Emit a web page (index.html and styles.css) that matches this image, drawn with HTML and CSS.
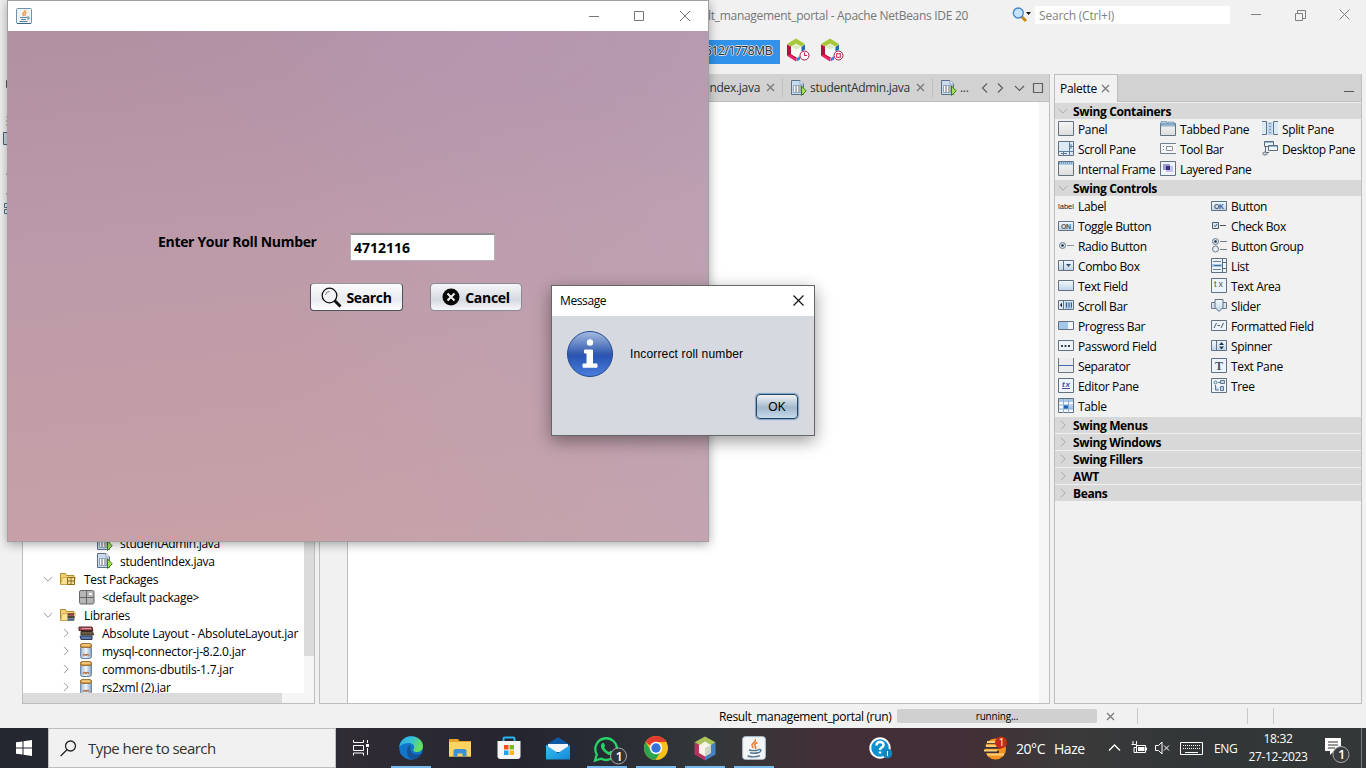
FILE: index.html
```html
<!DOCTYPE html>
<html lang="en">
<head>
<meta charset="utf-8">
<title>Apache NetBeans IDE 20</title>
<link rel="stylesheet" href="styles.css">
</head>
<body>
<svg class="defs" width="0" height="0">
  <defs>
    <linearGradient id="gBlue" x1="0" y1="0" x2="0" y2="1"><stop offset="0" stop-color="#f4f9fd"/><stop offset="1" stop-color="#bcd3e8"/></linearGradient>
    <linearGradient id="gGrey" x1="0" y1="0" x2="0" y2="1"><stop offset="0" stop-color="#f6f6f6"/><stop offset="1" stop-color="#dcdcdc"/></linearGradient>
    <linearGradient id="gInfo" x1="0" y1="0" x2="0" y2="1"><stop offset="0" stop-color="#a5bde3"/><stop offset=".5" stop-color="#3259ad"/><stop offset=".55" stop-color="#2a55b4"/><stop offset="1" stop-color="#4a80dd"/></linearGradient>
    <linearGradient id="gMail" x1="0" y1="0" x2="1" y2="1"><stop offset="0" stop-color="#35c1f5"/><stop offset="1" stop-color="#1687d8"/></linearGradient>
    <linearGradient id="gEdge" x1="0" y1="0" x2="1" y2="0.4"><stop offset="0" stop-color="#2aa7e0"/><stop offset=".5" stop-color="#35c1d8"/><stop offset="1" stop-color="#66e05c"/></linearGradient>
    <linearGradient id="gJar" x1="0" y1="0" x2="1" y2="0"><stop offset="0" stop-color="#9fb4cc"/><stop offset=".5" stop-color="#eef6fc"/><stop offset="1" stop-color="#86a5c6"/></linearGradient>
    <symbol id="java-file" viewBox="0 0 16 16">
      <path d="M.5.500h8.500l3.500 3.500v10.500H.5z" fill="#c9dced" stroke="#5c7088"/><path d="M9 .5v3.500h3.500" fill="#fff" stroke="#8aa0b8"/>
      <path d="M2.500 5.500h8.500v7H2.500z" fill="#fff" stroke="#7c93a8" stroke-width=".8"/><path d="M4 7h2m1 0h3M4 9h2m1 0h3M4 11h2m1 0h3" stroke="#5d6470"/>
      <path d="M10.500 6v9.500l4.700-4.700z" fill="#a5e05c" stroke="#3c7a18"/>
    </symbol>
    <symbol id="close" viewBox="0 0 9 9"><path d="M1 1l7 7M8 1L1 8" stroke="#777" stroke-width="1.200" fill="none"/></symbol>
    <symbol id="down" viewBox="0 0 10 10"><path d="M.8 3L5 7.200 9.200 3" fill="none" stroke="currentColor"/></symbol>
    <symbol id="right" viewBox="0 0 10 10"><path d="M3 .8L7.200 5 3 9.200" fill="none" stroke="currentColor"/></symbol>
    <symbol id="folder" viewBox="0 0 16 14"><path d="M.5 12.500V1.500h5l1 2h7.500v9z" fill="#f3cf72" stroke="#b18c35"/><path d="M.5 12.500l2-7H15.500l-2 7z" fill="#fae092" stroke="#c59e44" stroke-width=".7"/></symbol>
    <symbol id="jar" viewBox="0 0 12 16"><rect x=".6" y="2.500" width="10.800" height="13" rx="2" fill="url(#gJar)" stroke="#65809f"/><rect x=".5" y=".7" width="11" height="3.600" rx="1.500" fill="#e4ab4d" stroke="#8f5d1c"/><path d="M2 2h8" stroke="#fbe3a8"/><path d="M3 12.500q1.500-2 3 0 1.500-2 3 0" fill="none" stroke="#b4774e" stroke-width="1.300"/></symbol>
    <symbol id="netbeans" viewBox="0 0 24 24"><path d="M1 6L10 .5l9 5.500-3.500 2.500L10 5.500 5 8.500z" fill="#a6c838"/><path d="M1 6.500l4 2v7.500l5.500 3.200v4L1 17.500z" fill="#b01239"/><path d="M3.500 16.500l6.500 4v3L1.500 18z" fill="#f0256a"/><path d="M19 6.500v5l-3.500 2V9z" fill="#2468b4"/><path d="M11 20l3-1.800v3.300l-3 1.800z" fill="#2489e4"/><path d="M5.500 9L10 6.300l5 2.700v7.500L10 19l-4.500-2.600z" fill="#f9fbf6"/><path d="M5.500 9l4.500 2.600L15 9l-5-2.700z" fill="#dcebc0"/></symbol>
    <symbol id="cup" viewBox="0 0 24 24"><rect x=".7" y=".7" width="22.600" height="22.600" rx="2.500" fill="#f3f5f6" stroke="#bccbd6"/><path d="M13 3.500c2 2.500-4 4-3 6 .4 1 1.500 1.500 1 2.800M15.500 6.500c-3 1.300-3.500 2.400-2 4 .6.800.2 1.500-.7 2" fill="none" stroke="#e87b2d" stroke-width="1.500"/><path d="M7 14q4.500 1.300 9.500 0M8 16.700q3.500 1 7.500 0M5.500 20q6.500 1.800 12.500-.3M16.500 13.500c4-.8 2.500 3-1 3.500" fill="none" stroke="#507590" stroke-width="1.400"/></symbol>
  </defs>
</svg>

<div class="desktop">
  <div class="ide">
    <header class="titlebar">
      <span class="ide-title">Result_management_portal - Apache NetBeans IDE 20</span>
      <svg class="find" width="20" height="16" viewBox="0 0 20 16"><path d="M9.500 9.500l4.500 4.500" stroke="#c98a1b" stroke-width="3"/><circle cx="6.300" cy="6" r="5" fill="#c3e2fb" stroke="#4584c4" stroke-width="1.300"/><path d="M14 5h5l-2.500 3z" fill="#111"/></svg>
      <div class="quick">Search (Ctrl+I)</div>
      <svg class="wctl" width="110" height="12" viewBox="0 0 110 12" fill="none" stroke="#808080"><path d="M5 5.500h10M49.500 4.500h7v7h-7zM51.500 4V1.500h8v8H57M93.500.5l10 10m0-10l-10 10"/></svg>
    </header>
    <div class="toolbar">
      <div class="memory"><span>512/1778MB</span></div>
      <svg width="24" height="24" viewBox="0 0 24 24"><use href="#netbeans"/><circle cx="18.500" cy="17.500" r="4.500" fill="#fff" stroke="#a4163c"/><path d="M18.500 14.500v3h2.500" fill="none" stroke="#cf1843"/></svg>
      <svg width="24" height="24" viewBox="0 0 24 24"><use href="#netbeans"/><circle cx="18.500" cy="17.500" r="4.500" fill="#fff" stroke="#a4163c"/><rect x="16.700" y="15.700" width="3.600" height="3.600" fill="#fff" stroke="#cf1843"/></svg>
    </div>
    <div class="work">
      <svg class="rail" width="10" height="150" viewBox="0 0 10 150"><path d="M6.500 6.500h3v7h-3z" fill="none" stroke="#555"/><path d="M6.500 43h2M6.500 47h2M6.500 51h2" stroke="#a29432" stroke-width="2"/><path d="M3.500 58.500h6v12h-6z" fill="#c9d6e2" stroke="#4f6275"/><path d="M6.500 100h2M6.500 120h2" stroke="#8d6a22" stroke-width="2"/><path d="M4.500 129.500h5v4h-5zm0 6h5v4h-5z" fill="#e5edf4" stroke="#506f8a"/></svg>
      <section class="projects">
        <div class="tree-area">
          <div class="tree">
            <div class="node file"><svg width="16" height="16"><use href="#java-file"/></svg><span>studentAdmin.java</span></div>
            <div class="node file"><svg width="16" height="16"><use href="#java-file"/></svg><span>studentIndex.java</span></div>
            <div class="node group"><svg class="chev" width="10" height="10"><use href="#down"/></svg><svg width="16" height="14"><use href="#folder"/><path d="M7.500 5.500h7v7h-7zM7.500 9h7M11 5.500v7" fill="#f3dc8e" stroke="#8c6a1f"/></svg><span>Test Packages</span></div>
            <div class="node pkg"><svg width="16" height="15" viewBox="0 0 16 15"><rect x=".5" y=".5" width="14.500" height="13.500" rx="1.500" fill="#b5b5b5" stroke="#696969"/><path d="M1 7.500h14M7.500 1v13" stroke="#666"/><path d="M10 3h3v2h-3z" fill="#f4f4f4"/></svg><span>&lt;default package&gt;</span></div>
            <div class="node group"><svg class="chev" width="10" height="10"><use href="#down"/></svg><svg width="16" height="14"><use href="#folder"/><path d="M7.500 6.500h6.500" stroke="#813b43" stroke-width="2.500"/><path d="M7.500 9h7" stroke="#494437" stroke-width="2"/><path d="M7.500 11.500h6.500" stroke="#49689b" stroke-width="2.500"/></svg><span>Libraries</span></div>
            <div class="node lib"><svg class="chev" width="10" height="10"><use href="#right"/></svg><svg width="17" height="15" viewBox="0 0 17 15"><path d="M1 1h13l1 3.500H1z" fill="#a65359" stroke="#552329"/><path d="M3 5.500h11.500l1 3.500H3z" fill="#695a43" stroke="#332c20"/><path d="M2 10h12v3.500H3z" fill="#5f79ad" stroke="#293856"/><path d="M4 2.500h9" stroke="#d99da0"/></svg><span class="long">Absolute Layout - AbsoluteLayout.jar</span></div>
            <div class="node lib"><svg class="chev" width="10" height="10"><use href="#right"/></svg><svg class="jar" width="12" height="16"><use href="#jar"/></svg><span class="wide">mysql-connector-j-8.2.0.jar</span></div>
            <div class="node lib"><svg class="chev" width="10" height="10"><use href="#right"/></svg><svg class="jar" width="12" height="16"><use href="#jar"/></svg><span class="wide">commons-dbutils-1.7.jar</span></div>
            <div class="node lib"><svg class="chev" width="10" height="10"><use href="#right"/></svg><svg class="jar" width="12" height="16"><use href="#jar"/></svg><span>rs2xml (2).jar</span></div>
          </div>
          <div class="vscroll"><i></i></div>
        </div>
        <div class="hscroll"><i></i></div>
      </section>
      <section class="editor">
        <div class="tabs">
          <div class="tab first"><span>studentIndex.java</span><svg width="9" height="9"><use href="#close"/></svg></div>
          <div class="tab"><svg width="16" height="16"><use href="#java-file"/></svg><span>studentAdmin.java</span><svg width="9" height="9"><use href="#close"/></svg></div>
          <div class="tab last"><svg width="16" height="16"><use href="#java-file"/></svg><span>...</span></div>
          <svg class="tabctl" width="70" height="12" viewBox="0 0 70 12" fill="none" stroke="#606060" stroke-width="1.200"><path d="M9 1.500L4.500 6 9 10.500M20 1.500L24.500 6 20 10.500M37 4l4.500 4.500L46 4M55.500 1.500h9v9h-9z"/></svg>
        </div>
        <div class="canvas"><div class="gutter"></div><div class="page"></div><div class="track"></div></div>
      </section>
      <section class="palette">
        <div class="ptabs"><div class="ptab">Palette<svg width="9" height="9"><use href="#close"/></svg></div><i class="minimize"></i></div>
        <div class="pbody">
          <h3><svg width="10" height="10"><use href="#down"/></svg>Swing Containers</h3>
          <div class="grid three">
            <div><svg viewBox="0 0 16 16"><path d="M.5.500h15v14H.5z" fill="url(#gGrey)" stroke="#617181"/></svg>Panel</div>
            <div><svg viewBox="0 0 16 16"><path d="M.5 2.500h15v12H.5z" fill="url(#gGrey)" stroke="#617181"/><path d="M1 3h14v2H1zM1 .5h6V3H1zM8 1h6v2H8z" fill="#a9cbe9" stroke="#7593ae" stroke-width=".7"/></svg>Tabbed Pane</div>
            <div><svg viewBox="0 0 16 16"><path d="M0 .5h4.500v13H0M16 .5h-4.500v13H16" fill="#d9e9f6"/><path d="M0 .5h4.500v13H0M16 .5h-4.500v13H16" fill="none" stroke="#617181"/><path d="M5.500 1h5v13h-5z" fill="#b8d3ee"/><path d="M8 2v11" stroke="#44688f" stroke-dasharray="1 2"/></svg>Split Pane</div>
            <div><svg viewBox="0 0 16 16"><path d="M.5.500h15v14H.5z" fill="#dbeaf6" stroke="#617181"/><path d="M11.500 1v14M1 10.500h14M13 3v5M3 12.500h6" stroke="#5f7e9b"/><path d="M12 5.500h3M5.500 11v4" stroke="#5f7e9b"/></svg>Scroll Pane</div>
            <div><svg viewBox="0 0 16 16"><path d="M16 2.500H.5v10H16" fill="#f6f6f6" stroke="#71808c"/><path d="M3.500 5v6" stroke="#788" stroke-dasharray="1 2"/><path d="M6.500 5.500h6v4h-6z" fill="#fff" stroke="#8592a0"/></svg>Tool Bar</div>
            <div><svg viewBox="0 0 16 16"><path d="M2.500.5h9v5h-9zM6.500 4.500h9v5h-9z" fill="#eff6fc" stroke="#5d6c7a"/><path d="M3 1.500h8M7 5.500h8" stroke="#8fb8de"/><path d="M3.500 6v5.500H7" fill="none" stroke="#5d6c7a"/><ellipse cx="3" cy="12.500" rx="2.200" ry="1.500" fill="#ddd" stroke="#5d6c7a"/></svg>Desktop Pane</div>
            <div><svg viewBox="0 0 16 16"><path d="M.5.500h15v14H.5z" fill="url(#gGrey)" stroke="#617181"/><path d="M1 1h14v3H1z" fill="#a9cbe9"/><path d="M1 2h14" stroke="#536f88" stroke-dasharray="1 1"/></svg>Internal Frame</div>
            <div><svg viewBox="0 0 16 16"><path d="M.5.500h15v14H.5z" fill="#eef4fa" stroke="#617181"/><path d="M3 3h7v6H3z" fill="#9d99d6"/><path d="M6 5h7v6H6z" fill="#c4c2ec"/><path d="M6 5h4v4H6z" fill="#393579"/></svg>Layered Pane</div>
          </div>
          <h3><svg width="10" height="10"><use href="#down"/></svg>Swing Controls</h3>
          <div class="grid two">
            <div><svg viewBox="0 0 16 16"><text class="tiny wordy" x="0" y="10.500" textLength="16" lengthAdjust="spacingAndGlyphs">label</text></svg>Label</div>
            <div><svg viewBox="0 0 16 16"><path d="M.5 3.500h15v9H.5z" fill="url(#gBlue)" stroke="#617181"/><text class="tiny" x="3" y="11" textLength="10">OK</text></svg>Button</div>
            <div><svg viewBox="0 0 16 16"><path d="M.5 3.500h15v9H.5z" fill="url(#gBlue)" stroke="#617181"/><text class="tiny" x="3" y="11" textLength="10">ON</text></svg>Toggle Button</div>
            <div><svg viewBox="0 0 16 16"><path d="M1.500 4.500h6v6h-6z" fill="#d7e6f3" stroke="#4a5a69"/><path d="M3 7.500l1.500 1L6 6M9 7.500h6" fill="none" stroke="#4a5a69"/></svg>Check Box</div>
            <div><svg viewBox="0 0 16 16"><circle cx="4.500" cy="7.500" r="3" fill="#d7e6f3" stroke="#6d7b88"/><circle cx="4.500" cy="7.500" r="1.300" fill="#1e2e3d"/><path d="M9 7.500h7" stroke="#8a959f"/></svg>Radio Button</div>
            <div><svg viewBox="0 0 16 16"><circle cx="4.500" cy="3.500" r="3" fill="#d7e6f3" stroke="#6d7b88"/><circle cx="4.500" cy="3.500" r="1.300" fill="#1e2e3d"/><circle cx="4.500" cy="11" r="3" fill="#e6eef5" stroke="#6d7b88"/><path d="M9 3.500h7M9 11.500h7" stroke="#737f8a"/></svg>Button Group</div>
            <div><svg viewBox="0 0 16 16"><path d="M.5 2.500h15v10H.5zM5.500 3v9" fill="url(#gBlue)" stroke="#617181"/><path d="M8 6h5L10.500 9z" fill="#36536e"/></svg>Combo Box</div>
            <div><svg viewBox="0 0 16 16"><path d="M.5.500h15v14H.5z" fill="#edf5fb" stroke="#617181"/><path d="M2 3.500h8M2 11.500h8" stroke="#6a7f91"/><path d="M1 6h10v3H1z" fill="#a0c7ec"/><path d="M3 7.500h7" stroke="#526d85"/><path d="M11.500 1v14M12 4.500h3M12 10.500h3" stroke="#526d85"/></svg>List</div>
            <div><svg viewBox="0 0 16 16"><path d="M.5 2.500h15v10H.5z" fill="url(#gBlue)" stroke="#617181"/></svg>Text Field</div>
            <div><svg viewBox="0 0 16 16"><path d="M.5.500h15v14H.5z" fill="#edf5fb" stroke="#617181"/><text class="tiny big" x="3" y="8.500" textLength="9">tx</text></svg>Text Area</div>
            <div><svg viewBox="0 0 16 16"><path d="M.5 2.500h15v9H.5zM5.500 3v9" fill="#dceaf6" stroke="#617181"/><path d="M4 4.500v5L2 7z" fill="#222"/><path d="M7 4h7v7H7z" fill="#a8caea"/><path d="M8.500 4.500v5M11 4.500v5M13.500 4.500v5" stroke="#435e77"/></svg>Scroll Bar</div>
            <div><svg viewBox="0 0 16 16"><path d="M.5 4.500h15v6H.5z" fill="#d7e3ed" stroke="#6c7a88"/><path d="M4 1.500h8v8l-4 4-4-4z" fill="url(#gBlue)" stroke="#617181"/></svg>Slider</div>
            <div><svg viewBox="0 0 16 16"><path d="M.5 3.500h15v8H.5z" fill="#f2f6fa" stroke="#617181"/><path d="M1 4h9v7H1z" fill="#a4c9e8"/></svg>Progress Bar</div>
            <div><svg viewBox="0 0 16 16"><path d="M.5 2.500h15v10H.5z" fill="#edf3f8" stroke="#617181"/><path d="M3 10l2.500-5M6.500 7.500h2.500M10 10l2.500-5" stroke="#4b5966"/></svg>Formatted Field</div>
            <div><svg viewBox="0 0 16 16"><path d="M.5 2.500h15v10H.5z" fill="#edf3f8" stroke="#617181"/><path d="M3 8h2m1.500 0h2M10 8h2" stroke="#364553" stroke-width="2"/></svg>Password Field</div>
            <div><svg viewBox="0 0 16 16"><path d="M.5 2.500h15v10H.5zM5.500 3v10" fill="url(#gBlue)" stroke="#617181"/><path d="M8 7l2.500-3L13 7zM8 8.500h5L10.500 11.500z" fill="#203950"/></svg>Spinner</div>
            <div><svg viewBox="0 0 16 16"><path d="M.5 0v14.500h15V0" fill="#ececec" stroke="#6d7982"/><path d="M1 7.500h14" stroke="#466ab9"/></svg>Separator</div>
            <div><svg viewBox="0 0 16 16"><path d="M.5.500h15v14H.5z" fill="#edf5fb" stroke="#617181"/><text class="serif" x="4" y="11.500">T</text></svg>Text Pane</div>
            <div><svg viewBox="0 0 16 16"><path d="M.5.500h15v14H.5z" fill="#edf5fb" stroke="#617181"/><text class="tiny violet" x="4" y="9" textLength="8">tx</text><path d="M4 10.500h8" stroke="#5148a4"/></svg>Editor Pane</div>
            <div><svg viewBox="0 0 16 16"><path d="M.5.500h15v14H.5z" fill="#edf5fb" stroke="#617181"/><circle cx="4.500" cy="4.500" r="1.400" fill="none" stroke="#4d799e"/><path d="M4.500 7v5H8M7 4.500h2M9.500 2.500h4v3h-4zM9.500 8.500h3v4h-3z" fill="#b8d6f1" stroke="#637687"/></svg>Tree</div>
            <div><svg viewBox="0 0 16 16"><path d="M.5.500h15v14H.5z" fill="#f4f8fc" stroke="#617181"/><path d="M1 1h14v3H1zM10 8h5v3h-5z" fill="#a9c8e8"/><path d="M6 7h4v4H6z" fill="#1c64b8"/><path d="M1 7h14M1 11h14M5.500 1v14M10.500 1v14" stroke="#8bb0d0"/></svg>Table</div>
          </div>
          <h3><svg width="10" height="10"><use href="#right"/></svg>Swing Menus</h3>
          <h3><svg width="10" height="10"><use href="#right"/></svg>Swing Windows</h3>
          <h3><svg width="10" height="10"><use href="#right"/></svg>Swing Fillers</h3>
          <h3><svg width="10" height="10"><use href="#right"/></svg>AWT</h3>
          <h3><svg width="10" height="10"><use href="#right"/></svg>Beans</h3>
        </div>
      </section>
    </div>
    <footer class="status">
      <span class="job">Result_management_portal (run)</span>
      <div class="running">running...</div>
      <svg class="stop" width="9" height="9"><use href="#close"/></svg>
      <i class="sep s1"></i><i class="sep s2"></i><i class="sep s3"></i>
    </footer>
  </div>

  <div class="taskbar">
    <div class="start"><svg width="16" height="16" viewBox="0 0 16 16"><path d="M0 2.300L6.500 1.400v6.100H0zM7.500 1.200L16 0v7.500H7.500zM0 8.500h6.500v6.100L0 13.700zM7.500 8.500H16V16l-8.500-1.200z" fill="#fff"/></svg></div>
    <div class="tsearch"><svg width="17" height="17" viewBox="0 0 17 17" fill="none" stroke="#222" stroke-width="1.300"><circle cx="10.500" cy="6" r="5"/><path d="M7 9.800L.6 16"/></svg><span>Type here to search</span></div>
    <div class="app view"><svg width="17" height="16" viewBox="0 0 17 16" fill="none" stroke="#fff"><path d="M.5 0v2.500h10V0M.5 5.500h10v5H.5zM.5 15.500V13h10v2.500M14.500 0v3M14.500 8v7"/><path d="M13 4h3v3h-3z" fill="#fff" stroke="none"/></svg></div>
    <div class="app on"><svg width="24" height="24" viewBox="0 0 24 24"><circle cx="12" cy="12" r="11.800" fill="#1175c9"/><path d="M.3 11C1 4.500 6 .2 12 .2c7 0 12 4.600 12 9.800 0 4-3 6-6.500 6-3 0-4-1.300-2.800-3 1.500-2.500-.7-6-4.700-6C6 7 2 8.500.3 11z" fill="url(#gEdge)"/><path d="M8 15c0-3.500 1.600-5.500 4-5.800-2 2-.3 9.300 5.500 9.300 2.500 0 4.500-1 5.200-1.500C20.500 21.500 17 23.500 14 23.500c-4 0-6-4.500-6-8.500z" fill="#155398"/></svg></div>
    <div class="app"><svg width="22" height="20" viewBox="0 0 22 20"><path d="M0 1h9l1.500 2H22v15.500H0z" fill="#e4a22a"/><path d="M0 4h22v14.500H0z" fill="#fcd462"/><path d="M4.500 18.500v-5.500q0-2 2-2h9q2 0 2 2v5.500h-4v-3h-5v3z" fill="#3a91d8"/></svg></div>
    <div class="app"><svg width="24" height="24" viewBox="0 0 24 24"><path d="M6.500 6V2.800q0-1.300 1.300-1.300h8.400q1.300 0 1.300 1.300V6" fill="none" stroke="#26b5ed" stroke-width="2"/><path d="M.5 5h23v15q0 3-3 3h-17q-3 0-3-3z" fill="#f5f5f5"/><path d="M7 9h4.500v4.500H7z" fill="#f05022"/><path d="M12.500 9H17v4.500h-4.500z" fill="#7fb913"/><path d="M7 14.500h4.500V19H7z" fill="#1fa3ec"/><path d="M12.500 14.500H17V19h-4.500z" fill="#fdb813"/></svg></div>
    <div class="app"><svg width="24" height="23" viewBox="0 0 24 23"><path d="M0 8L12 0l12 8v5H0z" fill="#0e59a5"/><path d="M2 7h20v8H2z" fill="#f3f6f8"/><path d="M0 8l12 8 12-8v14.500H0z" fill="url(#gMail)"/></svg></div>
    <div class="app on"><svg class="whatsapp" width="34" height="29" viewBox="0 0 34 29"><path d="M2 24.500l1.800-6A10.800 10.800 0 1 1 8.200 22.700z" fill="#272b32" stroke="#25d366" stroke-width="2.300"/><path d="M8.500 8c1.300-1.700 2.300-1.500 3 .2.700 1.700.8 2-.3 3.200 1.200 2.300 2.700 3.700 5 4.700 1.500-1.700 2-1.500 3.300-.8 1.700 1 1.700 1.400.5 2.700-2 2.200-5.500.9-8.800-2.300C7.700 12.500 7.500 9.600 8.500 8z" fill="#25d366"/><circle cx="25.500" cy="20" r="8" fill="#313539" stroke="#aaa"/><text class="badge" x="22.500" y="24.500">1</text></svg></div>
    <div class="app on"><svg width="24" height="24" viewBox="0 0 24 24"><circle cx="12" cy="12" r="12" fill="#fbc116"/><path d="M1.600 6A12 12 0 0 1 22.400 6H12v8z" fill="#e33b2e"/><path d="M1.600 6A12 12 0 0 0 11.500 24l5.500-9-10-.2z" fill="#2da44e"/><circle cx="12" cy="12" r="6.200" fill="#fff"/><circle cx="12" cy="12" r="4.700" fill="#3572df"/></svg></div>
    <div class="app on"><svg width="22" height="25" viewBox="0 0 22 25"><path d="M11 .5l10.500 5.800L17 9.500 11 6 5 9 .5 6.300z" fill="#adc45c"/><path d="M.5 6.500L5 9v8l6 3.500v4L.5 18.500z" fill="#b83460"/><path d="M21.500 6.500v12L11 24.500v-4l6-3.500V9z" fill="#4382c4"/><path d="M11 5.500L17 9v8l-6 3.500L5 17V9z" fill="#f5f5e8"/><path d="M11 12l6-3v8l-6 3.500z" fill="#d2d5c5"/></svg></div>
    <div class="app on"><svg width="24" height="24"><use href="#cup"/></svg></div>
    <div class="tray">
      <svg class="help" width="24" height="23" viewBox="0 0 24 23"><circle cx="11" cy="11" r="9.700" fill="#0d91cf" stroke="#fff" stroke-width="2"/><path d="M7.500 8.500q0-3.500 3.500-3.500t3.500 3q0 1.800-2.500 3-1 .6-1 2" fill="none" stroke="#fff" stroke-width="2.500"/><path d="M11 14.500v2" stroke="#fff" stroke-width="2.500"/><circle cx="18.500" cy="16.500" r="4.800" fill="#1484bd"/><path d="M18.500 14v5" stroke="#fff"/></svg>
      <svg class="haze" width="25" height="25" viewBox="0 0 25 25"><circle cx="12.500" cy="13" r="10.500" fill="#f39322"/><path d="M4 6.500h14M1 11.500h17M0 16h16" stroke="#3e3035" stroke-width="2.500"/><path d="M4 6h12M3 10h19M1 14.500h13M4 18.500h17" stroke="#f8ce76" stroke-width="2"/><circle cx="18" cy="6.500" r="6" fill="#c42b1c"/><text class="alert" x="15.700" y="10">1</text></svg>
      <span class="temp">20°C</span><span class="cond">Haze</span>
      <svg class="icons" width="62" height="16" viewBox="0 0 62 16" fill="none" stroke="#fff"><path d="M1 10.500l5.500-5.500 5.500 5.500" stroke-width="1.300"/><path d="M28.500 5.500h9v7h-9zM38.500 7.500v3M25 1v3M28.500 1v3M23.500 4.500h5v3h-2.500v5h2.500"/><path d="M30 7h6.500v4H30z" fill="#fff" stroke="none"/><path d="M47.500 5.500h3l3.500-3.500v12l-3.500-3.500h-3zM56 5.500l5 5m0-5l-5 5"/></svg>
      <svg class="kbd" width="23" height="13" viewBox="0 0 23 13" fill="none" stroke="#fff"><path d="M.5.500h22v12H.5zM5 10.500h13"/><path d="M3 3.500h18M3 6.500h18" stroke-dasharray="1 1"/></svg>
      <span class="lang">ENG</span>
      <div class="clock"><span>18:32</span><span>27-12-2023</span></div>
      <svg class="note" width="26" height="26" viewBox="0 0 26 26"><path d="M0 0h16v13H9l-4 4v-4H0z" fill="#fff"/><path d="M3 4h10M3 7h10M3 10h7" stroke="#333"/><circle cx="16" cy="16.500" r="8" fill="#3a3d3e" stroke="#aaa"/><text class="badge" x="13" y="21">1</text></svg>
      <i class="edge"></i>
    </div>
  </div>

  <div class="window">
    <div class="wbar"><svg width="16" height="16" viewBox="0 0 16 16"><rect x=".5" y=".5" width="15" height="15" rx="1" fill="#eef2f5" stroke="#6f93ab"/><path d="M1 15.500h14" stroke="#3f6784"/><path d="M9 2c1 2-3 2.500-2 4.500.3.700.8 1 .5 1.500M10.500 4c-2.500 1.500-1 2.500-1.500 4" fill="none" stroke="#ee8a28" stroke-width="1.200"/><path d="M4 9.500h7M5 11.500h5M3.500 13.500h8M11 9h2v2h-2" fill="none" stroke="#5b84a3"/></svg><svg class="wbtn" width="104" height="12" viewBox="0 0 104 12" fill="none" stroke="#777"><path d="M1 6.500h10M46.500 1.500h9v9h-9zM92 1l10 10m0-10L92 11"/></svg></div>
    <div class="form">
      <div class="row"><label>Enter Your Roll Number</label><div class="field">4712116</div></div>
      <div class="buttons">
        <div class="btn"><svg width="21" height="21" viewBox="0 0 21 21"><circle cx="8.500" cy="8.500" r="7.300" fill="#f5f5f7" stroke="#111" stroke-width="1.300"/><path d="M4.500 8q.5-3.500 4-3.500" stroke="#777" fill="none"/><path d="M13.500 13.500l6 6" stroke="#111" stroke-width="3"/></svg><span>Search</span></div>
        <div class="btn second"><svg width="18" height="18" viewBox="0 0 18 18"><circle cx="9" cy="9" r="8.500" fill="#080808"/><path d="M5.500 5.500l7 7m0-7l-7 7" stroke="#eee" stroke-width="2"/></svg><span>Cancel</span></div>
      </div>
    </div>
  </div>

  <div class="dialog">
    <div class="dbar"><span>Message</span><svg width="11" height="11" viewBox="0 0 11 11"><path d="M.5.500l10 10m0-10l-10 10" stroke="#111" stroke-width="1.200"/></svg></div>
    <div class="dbody">
      <div class="dmsg"><svg width="48" height="48" viewBox="0 0 48 48"><circle cx="24" cy="24" r="22.500" fill="url(#gInfo)" stroke="#24478e"/><circle cx="24" cy="12.500" r="3.200" fill="#fff"/><path d="M18.500 20H26.500V34H31v3.200H17V34h4V23h-2.500z" fill="#fff" stroke="#fff" stroke-linejoin="round"/></svg><span>Incorrect roll number</span></div>
      <div class="ok">OK</div>
    </div>
  </div>
</div>
</body>
</html>
```
FILE: styles.css
```css
* { box-sizing: border-box; }
body { margin: 0; overflow: hidden; font-family: "Open Sans", "Noto Sans", sans-serif; font-size: 12px; letter-spacing: -0.3px; color: #000; }
.defs { position: absolute; }
svg { flex: none; display: block; }
span { white-space: nowrap; }
.desktop { position: relative; width: 1366px; height: 768px; overflow: hidden; display: flex; flex-direction: column; }

.ide { height: 728px; background: #f1f1f1; display: flex; flex-direction: column; }
.titlebar { height: 30px; display: flex; align-items: center; justify-content: flex-end; color: #777; }
.ide-title { margin-right: 44px; padding-top: 1px; }
.find { margin-right: 3px; }
.quick { width: 195px; height: 18px; background: #fff; padding-left: 4px; line-height: 19px; letter-spacing: -0.2px; color: #828282; }
.wctl { margin: 0 10px 0 16px; }
.toolbar { height: 44px; display: flex; justify-content: flex-end; align-items: center; padding: 0 522px 4px 0; gap: 10px; }
.memory { width: 130px; height: 24px; margin: 3px -4px 0 0; background: linear-gradient(174deg, transparent 0 14%, #3092ea 15%); display: flex; justify-content: flex-end; align-items: center; padding: 0 8px 3px 0; letter-spacing: -0.4px; color: #24333f; text-shadow: 1px 0 #ddd, -1px 0 #ddd, 0 1px #ddd, 0 -1px #ddd; }

.work { height: 630px; display: flex; }
.rail { width: 10px; margin-right: 12px; }
.projects { width: 293px; margin-right: 4px; border: 1px solid #bebebe; display: flex; flex-direction: column; }
.tree-area { flex: 1; min-height: 0; display: flex; background: #fff; overflow: hidden; }
.tree { flex: 1; min-width: 0; display: flex; flex-direction: column; justify-content: flex-end; margin-bottom: -3px; }
.node { height: 18px; flex: none; display: flex; align-items: center; }
.node .chev { color: #9a9a9a; }
.file { padding-left: 74px; gap: 7px; }
.group { padding-left: 20px; gap: 8px; }
.group .chev { margin-right: -1px; }
.pkg { padding-left: 56px; gap: 7px; }
.lib { padding-left: 38px; gap: 7px; }
.lib .jar { margin: 0 3px 0 2px; }
.long { letter-spacing: -0.25px; }
.wide { letter-spacing: -0.2px; }
.vscroll { width: 10px; background: #f5f5f5; }
.vscroll i { display: block; height: 581px; background: #dbdbdb; }
.hscroll { height: 10px; background: #f5f5f5; }
.hscroll i { display: block; width: 259px; height: 10px; background: #dbdbdb; }

.editor { width: 731px; margin-right: 4px; border: 1px solid #bebebe; border-top: 0; display: flex; flex-direction: column; }
.tabs { height: 28px; flex: none; background: #d2d2d2; border-bottom: 1px solid #bebebe; display: flex; justify-content: flex-end; align-items: center; color: #333; }
.tab { width: 150px; height: 19px; border-right: 1px solid #bebebe; display: flex; align-items: center; padding-left: 8px; }
.tab svg:first-child { margin-right: 3px; }
.tab svg:last-child { margin-left: auto; margin-right: 7px; }
.tab.first { width: 130px; justify-content: flex-end; }
.tab.first svg { margin-left: 6px; }
.tab.last { width: 45px; border: 0; }
.tabctl { margin-right: 1px; }
.canvas { flex: 1; display: flex; background: #fff; }
.gutter { width: 28px; background: #f1f1f1; border-right: 1px solid #bebebe; }
.page { flex: 1; }
.track { width: 10px; background: #f5f5f5; }

.palette { width: 308px; border: 1px solid #bebebe; border-top: 0; display: flex; flex-direction: column; }
.ptabs { height: 28px; flex: none; display: flex; justify-content: space-between; background: #d2d2d2; border-bottom: 1px solid #bebebe; }
.ptab { width: 63px; height: 28px; display: flex; align-items: center; gap: 4px; padding-left: 5px; background: #f1f1f1; border: 1px solid #bebebe; border-width: 1px 1px 0 0; }
.minimize { width: 10px; height: 1px; background: #555; margin: 17px 7px 0 0; }
.pbody { padding-top: 1px; }
.pbody h3 { margin: 0 0 1px; height: 16px; background: #d8d8d8; display: flex; align-items: center; gap: 5px; padding: 2px 0 0 3px; font-size: 12px; line-height: 16px; letter-spacing: -0.36px; }
.pbody h3 svg { color: #a8a8a8; margin-top: -2px; }
.grid { display: grid; grid-auto-rows: 20px; padding-left: 3px; margin: -1px 0 1px; letter-spacing: -0.36px; }
.three { grid-template-columns: repeat(3, 102px); }
.two { grid-template-columns: repeat(2, 153px); }
.grid div { display: flex; align-items: center; gap: 4px; white-space: nowrap; }
.grid svg { width: 16px; height: 16px; }
.tiny { font: bold 7px "Liberation Sans", sans-serif; fill: #495764; letter-spacing: 0; }
.wordy { font-size: 8px; font-weight: normal; fill: #222; }
.big { font-size: 9px; font-weight: normal; }
.violet { font-size: 8px; fill: #5148a4; font-style: italic; }
.serif { font: bold 12px "Liberation Serif", serif; fill: #44515d; }

.status { height: 24px; display: flex; align-items: center; }
.job { width: 173px; margin-left: 719px; letter-spacing: -0.35px; }
.running { width: 200px; height: 14px; margin-left: 5px; background: #d0d0d0; border-radius: 2px; text-align: center; font-size: 10px; line-height: 14px; letter-spacing: -0.2px; }
.stop { margin-left: 9px; }
.sep { width: 1px; height: 16px; background: #c8c8c8; }
.s1 { margin-left: 22px; }
.s2 { margin-left: 109px; }
.s3 { margin-left: 25px; }

.taskbar { height: 40px; display: flex; background: linear-gradient(90deg, #242630 0, #282a33 330px, #302c34 345px, #252530 520px, #292c34 600px, #33383a 710px, #432f37 830px, #432f37 960px, #3b3a3a 1070px, #313638 1200px, #343838 100%); color: #fff; }
.start { width: 48px; display: flex; align-items: center; justify-content: center; }
.tsearch { width: 288px; background: #f1f1f1; border: 1px solid #bdbdbd; display: flex; align-items: center; padding-left: 11px; gap: 11px; color: #333; font-size: 15px; letter-spacing: -0.55px; }
.app { width: 49px; display: flex; align-items: center; justify-content: center; }
.view { width: 50px; }
.whatsapp { margin: 4px 0 0 7px; }
.on { background: linear-gradient(#76b9ed, #76b9ed) center bottom / 40px 2px no-repeat; }
.badge { font: 600 13px "Open Sans", sans-serif; fill: #fff; letter-spacing: 0; }
.alert { font: 10px "Open Sans", sans-serif; fill: #fff; }
.tray { flex: 1; display: flex; align-items: center; font-size: 14px; letter-spacing: -0.45px; }
.help { margin-left: 91px; }
.haze { margin-left: 90px; }
.temp { width: 38px; margin-left: 8px; }
.cond { width: 54px; }
.kbd { margin-left: 10px; }
.lang { margin-left: 11px; font-size: 12px; width: 23px; letter-spacing: -0.3px; }
.clock { width: 60px; margin-left: 11px; display: flex; flex-direction: column; align-items: center; font-size: 12px; line-height: 18px; letter-spacing: -0.35px; }
.note { margin: 5px 0 0 17px; }
.edge { width: 1px; height: 40px; margin-left: 10px; background: #777; }

.window { position: absolute; left: 7px; top: 0; width: 702px; height: 542px; border: 1px solid #a2a0a2; display: flex; flex-direction: column; box-shadow: 0 2px 10px rgba(0, 0, 0, .35); }
.wbar { height: 30px; background: #fff; display: flex; align-items: center; justify-content: space-between; padding: 0 16px 0 8px; }
.form { flex: 1; background: radial-gradient(ellipse 360px 200px at 70% 0, rgba(180, 150, 178, .6), transparent), linear-gradient(90deg, transparent 40%, rgba(188, 166, 188, .45)), linear-gradient(174deg, #b190a2 0, #bd9aa9 40%, #c9a2a6 100%); padding: 202px 0 0 150px; font-size: 14px; font-weight: bold; }
.row { display: flex; }
.row label { width: 192px; line-height: 17px; letter-spacing: -0.33px; }
.field { width: 145px; height: 28px; background: #fff; border: 1px solid #b6b2b6; border-top: 2px solid #918e91; padding-left: 3px; line-height: 25px; letter-spacing: 0; }
.buttons { display: flex; gap: 27px; margin: 22px 0 0 152px; }
.btn { width: 93px; height: 28px; border: 1px solid #4c525c; border-top-color: #93959d; border-radius: 4px; background: linear-gradient(#fbfbfc, #e9ebef 60%, #fff); display: flex; align-items: center; justify-content: center; gap: 4px; letter-spacing: -0.35px; }
.btn.second { width: 92px; background: linear-gradient(#f6f7f9, #d6d9e1 60%, #f6f7fa); border-color: #8a8a92; letter-spacing: -0.3px; gap: 5px; }
.btn span { padding-top: 1px; }

.dialog { position: absolute; left: 551px; top: 285px; width: 264px; height: 151px; border: 1px solid #666; background: #d6d9df; box-shadow: 0 5px 16px rgba(0, 0, 0, .4); display: flex; flex-direction: column; }
.dbar { height: 30px; background: #fff; display: flex; justify-content: space-between; align-items: center; padding: 0 10px 2px 8px; letter-spacing: -0.38px; }
.dbody { flex: 1; padding: 14px 16px 0 14px; display: flex; flex-direction: column; font-family: "Liberation Sans", Arial, sans-serif; letter-spacing: 0.15px; }
.dmsg { display: flex; align-items: center; gap: 16px; }
.ok { align-self: flex-end; width: 42px; height: 25px; margin-top: 16px; border: 1px solid #2e4358; border-radius: 4px; box-shadow: 0 0 1px 1px #73a4d1; background: linear-gradient(#eff2f5, #a3b8cb 55%, #c6dced); display: flex; align-items: center; justify-content: center; padding-top: 1px; }
```
